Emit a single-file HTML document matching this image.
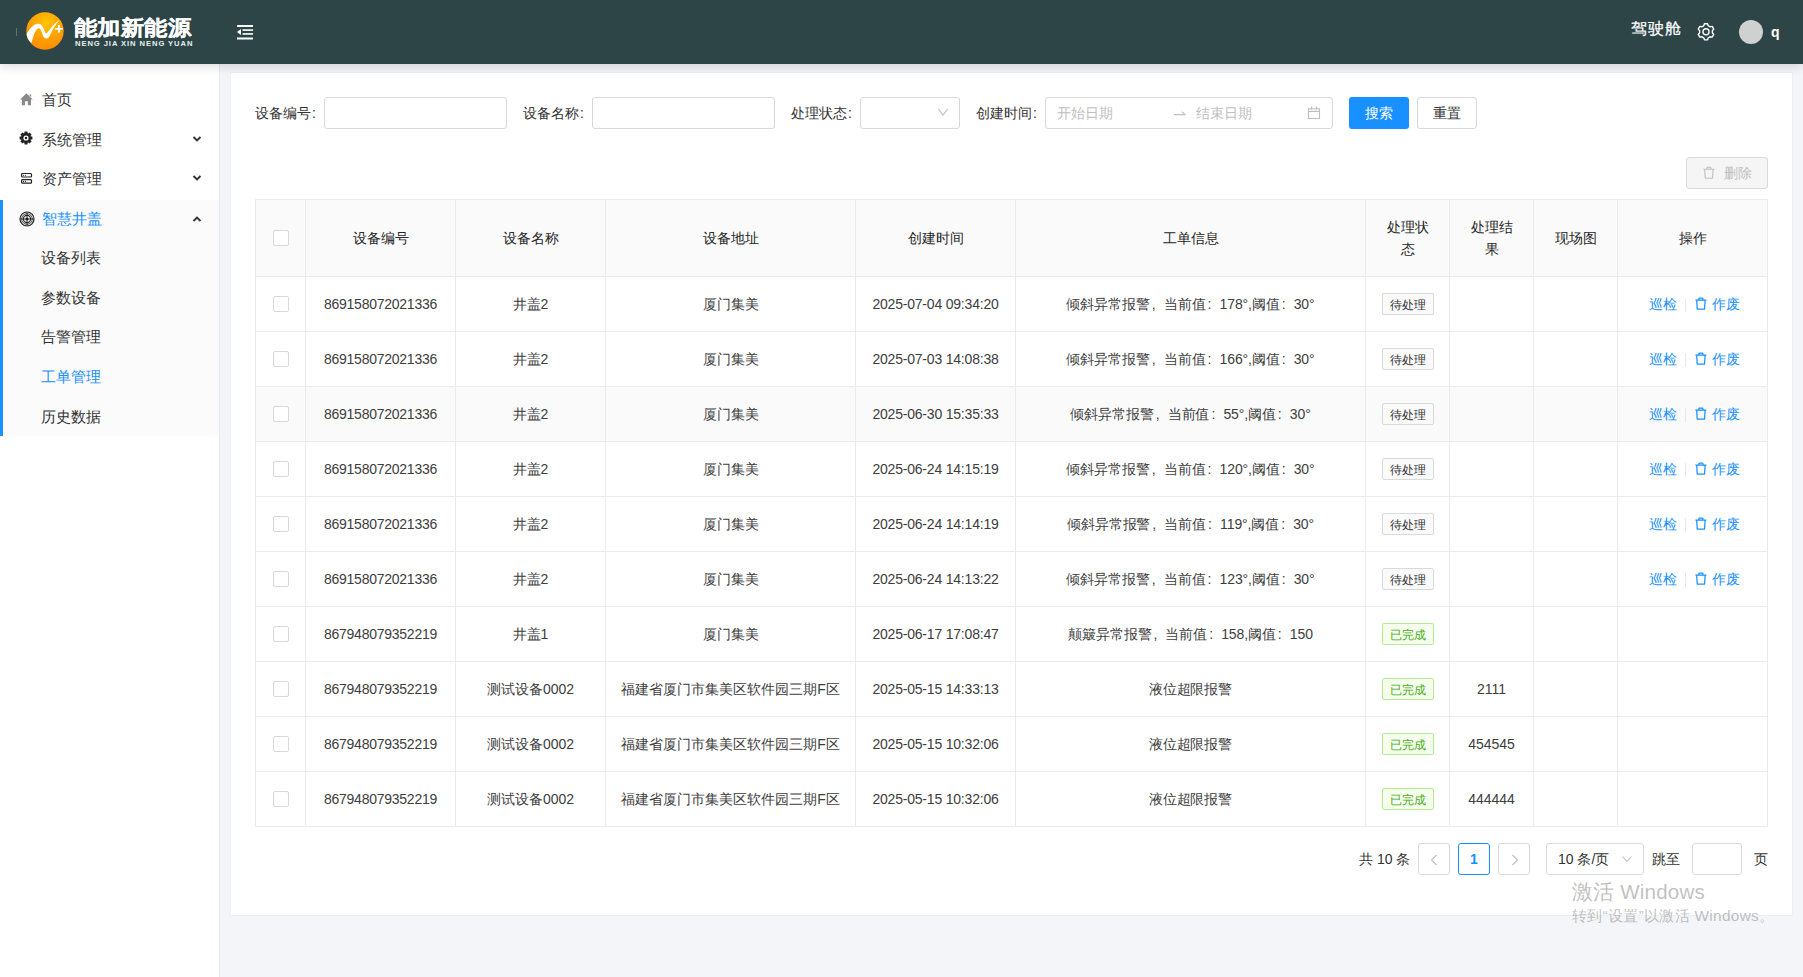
<!DOCTYPE html><html><head><meta charset="utf-8"><style>
*{box-sizing:border-box;margin:0;padding:0}
html,body{width:1803px;height:977px;overflow:hidden;background:#f4f5f9;font-family:"Liberation Sans",sans-serif;font-size:14px;color:#333}
.abs{position:absolute}
.hdr{left:0;top:0;width:1803px;height:64px;background:#2e4547;box-shadow:0 2px 10px rgba(0,21,41,.16);z-index:3}
.side{left:0;top:64px;width:220px;height:913px;background:#fff;border-right:1px solid #e8e8e8;z-index:2}
.card{left:230px;top:72px;width:1563px;height:844px;background:#fff;border:1px solid #eff0f3}
.t{position:absolute;white-space:nowrap;line-height:1}
.cell{position:absolute;display:flex;align-items:center;justify-content:center;white-space:nowrap;line-height:1;color:#3d3d3d}
.inp{position:absolute;border:1px solid #d9d9d9;border-radius:3px;background:#fff;height:32px}
.vl{position:absolute;width:1px;background:#ebebeb}
.hl{position:absolute;height:1px;background:#ebebeb}
.cb{position:absolute;width:16px;height:16px;border:1px solid #d9d9d9;border-radius:2px;background:#fff}
.tag{position:absolute;height:22px;width:52px;border:1px solid #d9d9d9;border-radius:2px;background:#fafafa;font-size:12px;line-height:20px;padding-top:1px;text-align:center;color:#333}
.tag.g{color:#48ad1a;background:#f6ffed;border-color:#b7eb8f}
.lnk{color:#1890ff}
.fw{display:inline-block;width:14px;padding-left:2px;text-align:left}
.mi{position:absolute;font-size:15px;line-height:1;white-space:nowrap;color:#333}
</style></head><body>
<div class="abs hdr">
<div class="abs" style="left:16px;top:28px;width:1px;height:8px;background:#5b7a6a"></div>
<svg class="abs" style="left:24px;top:10px" width="42" height="42" viewBox="0 0 42 42">
<defs><radialGradient id="lg" cx="0.55" cy="0.28" r="0.8"><stop offset="0" stop-color="#ffc400"/><stop offset="0.55" stop-color="#ff9f00"/><stop offset="1" stop-color="#ff8800"/></radialGradient></defs>
<circle cx="21" cy="21" r="18.7" fill="url(#lg)"/>
<clipPath id="lc"><circle cx="21" cy="21" r="18.7"/></clipPath>
<path clip-path="url(#lc)" d="M0.5 27.5 C4.5 20, 9 14.2, 13.5 13.8 C17.5 13.4, 19.3 17, 20.6 21 C21.4 23.3, 22.2 23.8, 23.2 22.8 C26.5 18.5, 30.5 12.8, 36 9.4 C31.5 14, 28.8 19, 26.4 24.5 C25.2 27.5, 23.8 28.6, 22 28.4 C19.8 28.1, 18.7 25.5, 17.9 22.5 C17.1 19.5, 16.2 18, 14.6 18.2 C12 18.6, 9.5 25, 7.5 33 Z" fill="#fff"/>
<path d="M31.2 18.9 h7.6 M35 15.1 v7.6" stroke="#fff" stroke-width="1.8"/>
</svg>
<div class="t" style="left:74px;top:16px;font-size:23px;font-weight:bold;color:#fff;letter-spacing:0.4px;transform:scaleY(0.9);transform-origin:0 22px;-webkit-text-stroke:0.3px #fff">能加新能源</div>
<div class="t" style="left:75px;top:39.5px;font-size:7.6px;font-weight:bold;color:#e8eeee;letter-spacing:0.93px">NENG JIA XIN NENG YUAN</div>
<svg class="abs" style="left:237px;top:24px" width="17" height="16" viewBox="0 0 17 16">
<rect x="0" y="1" width="16" height="2" fill="#fff"/>
<rect x="5.5" y="5.2" width="10.5" height="1.8" fill="#e6eeee"/>
<rect x="5.5" y="9" width="10.5" height="1.8" fill="#e6eeee"/>
<rect x="0" y="13.5" width="16" height="2" fill="#fff"/>
<path d="M0 8 L4 5 L4 11 Z" fill="#fff"/>
</svg>
<div class="t" style="left:1631px;top:21px;font-size:16px;color:#fff;letter-spacing:0.8px;-webkit-text-stroke:0.2px #fff">驾驶舱</div>
<svg class="abs" style="left:1696px;top:22px" width="20" height="20" viewBox="0 0 20 20">
<path d="M7.71 3.78 L8.44 1.70 L11.56 1.70 L12.29 3.78 A6.40 6.40 0 0 1 14.03 4.78 L16.19 4.37 L17.75 7.08 L16.32 8.75 A6.40 6.40 0 0 1 16.32 10.75 L17.75 12.42 L16.19 15.13 L14.03 14.72 A6.40 6.40 0 0 1 12.29 15.72 L11.56 17.80 L8.44 17.80 L7.71 15.72 A6.40 6.40 0 0 1 5.97 14.72 L3.81 15.13 L2.25 12.42 L3.68 10.75 A6.40 6.40 0 0 1 3.68 8.75 L2.25 7.08 L3.81 4.37 L5.97 4.78 A6.40 6.40 0 0 1 7.71 3.78 Z" fill="none" stroke="#fff" stroke-width="1.35" stroke-linejoin="round"/>
<circle cx="10" cy="9.75" r="3.05" fill="none" stroke="#fff" stroke-width="1.35"/>
</svg>
<div class="abs" style="left:1739px;top:20px;width:24px;height:24px;border-radius:50%;background:#cfd0d0"></div>
<div class="t" style="left:1771px;top:25px;font-size:14px;font-weight:bold;color:#fff">q</div>
</div>
<div class="abs side">
<div class="abs" style="left:0;top:136px;width:219px;height:236px;background:#fbfbfc"></div>
<div class="abs" style="left:0;top:136px;width:3px;height:236px;background:#1890ff"></div>
</div>
<svg class="abs" style="left:20px;top:93px;z-index:4" width="13" height="13" viewBox="0 0 13 13">
<path d="M6.4 0.3 L12.7 6.6 L11 6.6 L11 12.3 L7.8 12.3 L7.8 8.3 L5 8.3 L5 12.3 L1.8 12.3 L1.8 6.6 L0.1 6.6 Z" fill="#8a8a8a"/>
<path d="M9.5 1.5 h1.7 v2.6 l-1.7 -1.6Z" fill="#8a8a8a"/></svg>
<svg class="abs" style="left:19px;top:131.1px;z-index:4" width="14" height="14" viewBox="0 0 14 14">
<g fill="#222"><circle cx="7" cy="7" r="4.9"/>
<rect x="5.4" y="0.6" width="3.2" height="12.8" rx="0.4"/><rect x="0.6" y="5.4" width="12.8" height="3.2" rx="0.4"/>
<rect x="5.4" y="0.6" width="3.2" height="12.8" rx="0.4" transform="rotate(45 7 7)"/><rect x="5.4" y="0.6" width="3.2" height="12.8" rx="0.4" transform="rotate(-45 7 7)"/></g>
<circle cx="7" cy="7" r="2.6" fill="#fff"/><circle cx="7" cy="7" r="1.25" fill="#222"/></svg>
<svg class="abs" style="left:20px;top:172px;z-index:4" width="13" height="13" viewBox="0 0 13 13">
<rect x="1.6" y="1.5" width="9.9" height="3.5" rx="0.9" fill="none" stroke="#222" stroke-width="1.2"/>
<rect x="1.6" y="7.6" width="9.9" height="3.6" rx="0.9" fill="none" stroke="#222" stroke-width="1.2"/>
<circle cx="3.5" cy="3.25" r="0.6" fill="#222"/><circle cx="5.4" cy="3.25" r="0.6" fill="#222"/>
<circle cx="3.5" cy="9.4" r="0.6" fill="#222"/><circle cx="5.4" cy="9.4" r="0.6" fill="#222"/></svg>
<svg class="abs" style="left:18.6px;top:210.5px;z-index:4" width="16" height="16" viewBox="0 0 16 16">
<g fill="none" stroke="#222"><circle cx="8" cy="8" r="7" stroke-width="1.2"/><circle cx="8" cy="8" r="5.3" stroke-width="0.8"/>
<circle cx="8" cy="8" r="3.6" stroke-width="1.1"/><path d="M8 1.5v13M1.5 8h13" stroke-width="0.9"/></g>
<circle cx="8" cy="8" r="1.6" fill="#222"/></svg>
<div class="mi" style="left:42px;top:92px;color:#333;z-index:4">首页</div>
<div class="mi" style="left:42px;top:132px;color:#333;z-index:4">系统管理</div>
<svg class="abs" style="left:192px;top:135px;z-index:4" width="10" height="8" viewBox="0 0 10 8"><path d="M1.5 2 L5 5.5 L8.5 2" fill="none" stroke="#333" stroke-width="1.9"/></svg>
<div class="mi" style="left:42px;top:171px;color:#333;z-index:4">资产管理</div>
<svg class="abs" style="left:192px;top:174px;z-index:4" width="10" height="8" viewBox="0 0 10 8"><path d="M1.5 2 L5 5.5 L8.5 2" fill="none" stroke="#333" stroke-width="1.9"/></svg>
<div class="mi" style="left:42px;top:211px;color:#1890ff;z-index:4">智慧井盖</div>
<svg class="abs" style="left:192px;top:214.5px;z-index:4" width="10" height="8" viewBox="0 0 10 8"><path d="M1.5 6 L5 2.5 L8.5 6" fill="none" stroke="#333" stroke-width="1.9"/></svg>
<div class="mi" style="left:41px;top:250px;color:#333;z-index:4">设备列表</div>
<div class="mi" style="left:41px;top:290px;color:#333;z-index:4">参数设备</div>
<div class="mi" style="left:41px;top:329px;color:#333;z-index:4">告警管理</div>
<div class="mi" style="left:41px;top:369px;color:#1890ff;z-index:4">工单管理</div>
<div class="mi" style="left:41px;top:409px;color:#333;z-index:4">历史数据</div>
<div class="abs card"></div>
<div class="t" style="left:255px;top:106px;font-size:14px;color:#333">设备编号<span style="margin-left:1px">:</span></div>
<div class="t" style="left:523px;top:106px;font-size:14px;color:#333">设备名称<span style="margin-left:1px">:</span></div>
<div class="t" style="left:791px;top:106px;font-size:14px;color:#333">处理状态<span style="margin-left:1px">:</span></div>
<div class="t" style="left:976px;top:106px;font-size:14px;color:#333">创建时间<span style="margin-left:1px">:</span></div>
<div class="inp" style="left:324px;top:97px;width:183px"></div>
<div class="inp" style="left:592px;top:97px;width:183px"></div>
<div class="inp" style="left:860px;top:97px;width:100px"></div>
<svg class="abs" style="left:937px;top:108px" width="12" height="9" viewBox="0 0 12 9"><path d="M1.5 1.2 L6 7 L10.5 1.2" fill="none" stroke="#bfbfbf" stroke-width="1.1"/></svg>
<div class="inp" style="left:1045px;top:97px;width:288px"></div>
<div class="t" style="left:1057px;top:106px;color:#bfbfbf">开始日期</div>
<svg class="abs" style="left:1173px;top:108px" width="14" height="10" viewBox="0 0 14 10"><path d="M1 6.6 H12 L8.8 3.6" fill="none" stroke="#bfbfbf" stroke-width="1.15"/></svg>
<div class="t" style="left:1196px;top:106px;color:#bfbfbf">结束日期</div>
<svg class="abs" style="left:1307px;top:106px" width="14" height="14" viewBox="0 0 14 14"><path d="M1.5 2.8 H12.5 V12.5 H1.5 Z M1.5 5.4 H12.5 M4.5 0.4 V3.8 M9.5 0.4 V3.8" fill="none" stroke="#bfbfbf" stroke-width="1.1"/></svg>
<div class="abs" style="left:1349px;top:97px;width:60px;height:32px;background:#1890ff;border-radius:3px"></div>
<div class="t" style="left:1365px;top:106px;color:#fff">搜索</div>
<div class="inp" style="left:1417px;top:97px;width:60px"></div>
<div class="t" style="left:1433px;top:106px;color:#333">重置</div>
<div class="abs" style="left:1686px;top:157px;width:82px;height:32px;background:#f5f5f5;border:1px solid #d9d9d9;border-radius:3px"></div>
<svg class="abs" style="left:1703px;top:166px" width="12" height="13" viewBox="0 0 12 13"><path d="M3.9 3.1 V1.7 Q3.9 1.2 4.4 1.2 H7.4 Q7.9 1.2 7.9 1.7 V3.1 M0.4 3.2 H11.4 M1.7 3.2 L2.2 11.6 Q2.25 12.2 2.8 12.2 H9 Q9.55 12.2 9.6 11.6 L10.1 3.2" fill="none" stroke="#bfbfbf" stroke-width="1.1"/></svg>
<div class="t" style="left:1724px;top:166px;color:#bfbfbf">删除</div>
<div class="abs" style="left:255px;top:199px;width:1513px;height:77px;background:#fafafa"></div>
<div class="abs" style="left:255px;top:387px;width:1513px;height:54px;background:#fafafa"></div>
<div class="vl" style="left:255px;top:199px;height:628px"></div>
<div class="vl" style="left:305px;top:199px;height:628px"></div>
<div class="vl" style="left:455px;top:199px;height:628px"></div>
<div class="vl" style="left:605px;top:199px;height:628px"></div>
<div class="vl" style="left:855px;top:199px;height:628px"></div>
<div class="vl" style="left:1015px;top:199px;height:628px"></div>
<div class="vl" style="left:1365px;top:199px;height:628px"></div>
<div class="vl" style="left:1449px;top:199px;height:628px"></div>
<div class="vl" style="left:1533px;top:199px;height:628px"></div>
<div class="vl" style="left:1617px;top:199px;height:628px"></div>
<div class="vl" style="left:1767px;top:199px;height:628px"></div>
<div class="hl" style="left:255px;top:199px;width:1513px"></div>
<div class="hl" style="left:255px;top:276px;width:1513px"></div>
<div class="hl" style="left:255px;top:331px;width:1513px"></div>
<div class="hl" style="left:255px;top:386px;width:1513px"></div>
<div class="hl" style="left:255px;top:441px;width:1513px"></div>
<div class="hl" style="left:255px;top:496px;width:1513px"></div>
<div class="hl" style="left:255px;top:551px;width:1513px"></div>
<div class="hl" style="left:255px;top:606px;width:1513px"></div>
<div class="hl" style="left:255px;top:661px;width:1513px"></div>
<div class="hl" style="left:255px;top:716px;width:1513px"></div>
<div class="hl" style="left:255px;top:771px;width:1513px"></div>
<div class="hl" style="left:255px;top:826px;width:1513px"></div>
<div class="cb" style="left:273px;top:230px"></div>
<div class="cell" style="left:306px;top:200px;width:149px;height:76px;color:#262626">设备编号</div>
<div class="cell" style="left:456px;top:200px;width:149px;height:76px;color:#262626">设备名称</div>
<div class="cell" style="left:606px;top:200px;width:249px;height:76px;color:#262626">设备地址</div>
<div class="cell" style="left:856px;top:200px;width:159px;height:76px;color:#262626">创建时间</div>
<div class="cell" style="left:1016px;top:200px;width:349px;height:76px;color:#262626">工单信息</div>
<div class="cell" style="left:1366px;top:200px;width:83px;height:76px;color:#262626"><div style="text-align:center;line-height:22px">处理状<br>态</div></div>
<div class="cell" style="left:1450px;top:200px;width:83px;height:76px;color:#262626"><div style="text-align:center;line-height:22px">处理结<br>果</div></div>
<div class="cell" style="left:1534px;top:200px;width:83px;height:76px;color:#262626">现场图</div>
<div class="cell" style="left:1618px;top:200px;width:149px;height:76px;color:#262626">操作</div>
<div class="cb" style="left:273px;top:296px"></div>
<div class="cell" style="left:306px;top:277px;width:149px;height:54px;letter-spacing:-0.25px">869158072021336</div>
<div class="cell" style="left:456px;top:277px;width:149px;height:54px;">井盖2</div>
<div class="cell" style="left:606px;top:277px;width:249px;height:54px;">厦门集美</div>
<div class="cell" style="left:856px;top:277px;width:159px;height:54px;letter-spacing:-0.2px">2025-07-04 09:34:20</div>
<div class="cell" style="left:1016px;top:277px;width:349px;height:54px;letter-spacing:-0.1px">倾斜异常报警<span class="fw">,</span>当前值<span class="fw">:</span>178°,阈值<span class="fw">:</span>30°</div>
<div class="tag" style="left:1382px;top:293px">待处理</div>
<div class="t lnk" style="left:1649px;top:297px">巡检</div>
<div class="abs" style="left:1685px;top:298px;width:1px;height:14px;background:#e8e8e8"></div>
<div class="t lnk" style="left:1695px;top:297px;display:flex;align-items:center"><svg width="12" height="13" viewBox="0 0 12 13" style="margin-right:5px;position:relative;top:-0.5px"><path d="M3.9 3.1 V1.7 Q3.9 1.2 4.4 1.2 H7.4 Q7.9 1.2 7.9 1.7 V3.1 M0.4 3.2 H11.4 M1.7 3.2 L2.2 11.6 Q2.25 12.2 2.8 12.2 H9 Q9.55 12.2 9.6 11.6 L10.1 3.2" fill="none" stroke="#1890ff" stroke-width="1.25"/></svg>作废</div>
<div class="cb" style="left:273px;top:351px"></div>
<div class="cell" style="left:306px;top:332px;width:149px;height:54px;letter-spacing:-0.25px">869158072021336</div>
<div class="cell" style="left:456px;top:332px;width:149px;height:54px;">井盖2</div>
<div class="cell" style="left:606px;top:332px;width:249px;height:54px;">厦门集美</div>
<div class="cell" style="left:856px;top:332px;width:159px;height:54px;letter-spacing:-0.2px">2025-07-03 14:08:38</div>
<div class="cell" style="left:1016px;top:332px;width:349px;height:54px;letter-spacing:-0.1px">倾斜异常报警<span class="fw">,</span>当前值<span class="fw">:</span>166°,阈值<span class="fw">:</span>30°</div>
<div class="tag" style="left:1382px;top:348px">待处理</div>
<div class="t lnk" style="left:1649px;top:352px">巡检</div>
<div class="abs" style="left:1685px;top:353px;width:1px;height:14px;background:#e8e8e8"></div>
<div class="t lnk" style="left:1695px;top:352px;display:flex;align-items:center"><svg width="12" height="13" viewBox="0 0 12 13" style="margin-right:5px;position:relative;top:-0.5px"><path d="M3.9 3.1 V1.7 Q3.9 1.2 4.4 1.2 H7.4 Q7.9 1.2 7.9 1.7 V3.1 M0.4 3.2 H11.4 M1.7 3.2 L2.2 11.6 Q2.25 12.2 2.8 12.2 H9 Q9.55 12.2 9.6 11.6 L10.1 3.2" fill="none" stroke="#1890ff" stroke-width="1.25"/></svg>作废</div>
<div class="cb" style="left:273px;top:406px"></div>
<div class="cell" style="left:306px;top:387px;width:149px;height:54px;letter-spacing:-0.25px">869158072021336</div>
<div class="cell" style="left:456px;top:387px;width:149px;height:54px;">井盖2</div>
<div class="cell" style="left:606px;top:387px;width:249px;height:54px;">厦门集美</div>
<div class="cell" style="left:856px;top:387px;width:159px;height:54px;letter-spacing:-0.2px">2025-06-30 15:35:33</div>
<div class="cell" style="left:1016px;top:387px;width:349px;height:54px;letter-spacing:-0.1px">倾斜异常报警<span class="fw">,</span>当前值<span class="fw">:</span>55°,阈值<span class="fw">:</span>30°</div>
<div class="tag" style="left:1382px;top:403px">待处理</div>
<div class="t lnk" style="left:1649px;top:407px">巡检</div>
<div class="abs" style="left:1685px;top:408px;width:1px;height:14px;background:#e8e8e8"></div>
<div class="t lnk" style="left:1695px;top:407px;display:flex;align-items:center"><svg width="12" height="13" viewBox="0 0 12 13" style="margin-right:5px;position:relative;top:-0.5px"><path d="M3.9 3.1 V1.7 Q3.9 1.2 4.4 1.2 H7.4 Q7.9 1.2 7.9 1.7 V3.1 M0.4 3.2 H11.4 M1.7 3.2 L2.2 11.6 Q2.25 12.2 2.8 12.2 H9 Q9.55 12.2 9.6 11.6 L10.1 3.2" fill="none" stroke="#1890ff" stroke-width="1.25"/></svg>作废</div>
<div class="cb" style="left:273px;top:461px"></div>
<div class="cell" style="left:306px;top:442px;width:149px;height:54px;letter-spacing:-0.25px">869158072021336</div>
<div class="cell" style="left:456px;top:442px;width:149px;height:54px;">井盖2</div>
<div class="cell" style="left:606px;top:442px;width:249px;height:54px;">厦门集美</div>
<div class="cell" style="left:856px;top:442px;width:159px;height:54px;letter-spacing:-0.2px">2025-06-24 14:15:19</div>
<div class="cell" style="left:1016px;top:442px;width:349px;height:54px;letter-spacing:-0.1px">倾斜异常报警<span class="fw">,</span>当前值<span class="fw">:</span>120°,阈值<span class="fw">:</span>30°</div>
<div class="tag" style="left:1382px;top:458px">待处理</div>
<div class="t lnk" style="left:1649px;top:462px">巡检</div>
<div class="abs" style="left:1685px;top:463px;width:1px;height:14px;background:#e8e8e8"></div>
<div class="t lnk" style="left:1695px;top:462px;display:flex;align-items:center"><svg width="12" height="13" viewBox="0 0 12 13" style="margin-right:5px;position:relative;top:-0.5px"><path d="M3.9 3.1 V1.7 Q3.9 1.2 4.4 1.2 H7.4 Q7.9 1.2 7.9 1.7 V3.1 M0.4 3.2 H11.4 M1.7 3.2 L2.2 11.6 Q2.25 12.2 2.8 12.2 H9 Q9.55 12.2 9.6 11.6 L10.1 3.2" fill="none" stroke="#1890ff" stroke-width="1.25"/></svg>作废</div>
<div class="cb" style="left:273px;top:516px"></div>
<div class="cell" style="left:306px;top:497px;width:149px;height:54px;letter-spacing:-0.25px">869158072021336</div>
<div class="cell" style="left:456px;top:497px;width:149px;height:54px;">井盖2</div>
<div class="cell" style="left:606px;top:497px;width:249px;height:54px;">厦门集美</div>
<div class="cell" style="left:856px;top:497px;width:159px;height:54px;letter-spacing:-0.2px">2025-06-24 14:14:19</div>
<div class="cell" style="left:1016px;top:497px;width:349px;height:54px;letter-spacing:-0.1px">倾斜异常报警<span class="fw">,</span>当前值<span class="fw">:</span>119°,阈值<span class="fw">:</span>30°</div>
<div class="tag" style="left:1382px;top:513px">待处理</div>
<div class="t lnk" style="left:1649px;top:517px">巡检</div>
<div class="abs" style="left:1685px;top:518px;width:1px;height:14px;background:#e8e8e8"></div>
<div class="t lnk" style="left:1695px;top:517px;display:flex;align-items:center"><svg width="12" height="13" viewBox="0 0 12 13" style="margin-right:5px;position:relative;top:-0.5px"><path d="M3.9 3.1 V1.7 Q3.9 1.2 4.4 1.2 H7.4 Q7.9 1.2 7.9 1.7 V3.1 M0.4 3.2 H11.4 M1.7 3.2 L2.2 11.6 Q2.25 12.2 2.8 12.2 H9 Q9.55 12.2 9.6 11.6 L10.1 3.2" fill="none" stroke="#1890ff" stroke-width="1.25"/></svg>作废</div>
<div class="cb" style="left:273px;top:571px"></div>
<div class="cell" style="left:306px;top:552px;width:149px;height:54px;letter-spacing:-0.25px">869158072021336</div>
<div class="cell" style="left:456px;top:552px;width:149px;height:54px;">井盖2</div>
<div class="cell" style="left:606px;top:552px;width:249px;height:54px;">厦门集美</div>
<div class="cell" style="left:856px;top:552px;width:159px;height:54px;letter-spacing:-0.2px">2025-06-24 14:13:22</div>
<div class="cell" style="left:1016px;top:552px;width:349px;height:54px;letter-spacing:-0.1px">倾斜异常报警<span class="fw">,</span>当前值<span class="fw">:</span>123°,阈值<span class="fw">:</span>30°</div>
<div class="tag" style="left:1382px;top:568px">待处理</div>
<div class="t lnk" style="left:1649px;top:572px">巡检</div>
<div class="abs" style="left:1685px;top:573px;width:1px;height:14px;background:#e8e8e8"></div>
<div class="t lnk" style="left:1695px;top:572px;display:flex;align-items:center"><svg width="12" height="13" viewBox="0 0 12 13" style="margin-right:5px;position:relative;top:-0.5px"><path d="M3.9 3.1 V1.7 Q3.9 1.2 4.4 1.2 H7.4 Q7.9 1.2 7.9 1.7 V3.1 M0.4 3.2 H11.4 M1.7 3.2 L2.2 11.6 Q2.25 12.2 2.8 12.2 H9 Q9.55 12.2 9.6 11.6 L10.1 3.2" fill="none" stroke="#1890ff" stroke-width="1.25"/></svg>作废</div>
<div class="cb" style="left:273px;top:626px"></div>
<div class="cell" style="left:306px;top:607px;width:149px;height:54px;letter-spacing:-0.25px">867948079352219</div>
<div class="cell" style="left:456px;top:607px;width:149px;height:54px;">井盖1</div>
<div class="cell" style="left:606px;top:607px;width:249px;height:54px;">厦门集美</div>
<div class="cell" style="left:856px;top:607px;width:159px;height:54px;letter-spacing:-0.2px">2025-06-17 17:08:47</div>
<div class="cell" style="left:1016px;top:607px;width:349px;height:54px;letter-spacing:-0.1px">颠簸异常报警<span class="fw">,</span>当前值<span class="fw">:</span>158,阈值<span class="fw">:</span>150</div>
<div class="tag g" style="left:1382px;top:623px">已完成</div>
<div class="cb" style="left:273px;top:681px"></div>
<div class="cell" style="left:306px;top:662px;width:149px;height:54px;letter-spacing:-0.25px">867948079352219</div>
<div class="cell" style="left:456px;top:662px;width:149px;height:54px;">测试设备0002</div>
<div class="cell" style="left:606px;top:662px;width:249px;height:54px;">福建省厦门市集美区软件园三期F区</div>
<div class="cell" style="left:856px;top:662px;width:159px;height:54px;letter-spacing:-0.2px">2025-05-15 14:33:13</div>
<div class="cell" style="left:1016px;top:662px;width:349px;height:54px;letter-spacing:-0.1px">液位超限报警</div>
<div class="tag g" style="left:1382px;top:678px">已完成</div>
<div class="cell" style="left:1450px;top:662px;width:83px;height:54px;">2111</div>
<div class="cb" style="left:273px;top:736px"></div>
<div class="cell" style="left:306px;top:717px;width:149px;height:54px;letter-spacing:-0.25px">867948079352219</div>
<div class="cell" style="left:456px;top:717px;width:149px;height:54px;">测试设备0002</div>
<div class="cell" style="left:606px;top:717px;width:249px;height:54px;">福建省厦门市集美区软件园三期F区</div>
<div class="cell" style="left:856px;top:717px;width:159px;height:54px;letter-spacing:-0.2px">2025-05-15 10:32:06</div>
<div class="cell" style="left:1016px;top:717px;width:349px;height:54px;letter-spacing:-0.1px">液位超限报警</div>
<div class="tag g" style="left:1382px;top:733px">已完成</div>
<div class="cell" style="left:1450px;top:717px;width:83px;height:54px;">454545</div>
<div class="cb" style="left:273px;top:791px"></div>
<div class="cell" style="left:306px;top:772px;width:149px;height:54px;letter-spacing:-0.25px">867948079352219</div>
<div class="cell" style="left:456px;top:772px;width:149px;height:54px;">测试设备0002</div>
<div class="cell" style="left:606px;top:772px;width:249px;height:54px;">福建省厦门市集美区软件园三期F区</div>
<div class="cell" style="left:856px;top:772px;width:159px;height:54px;letter-spacing:-0.2px">2025-05-15 10:32:06</div>
<div class="cell" style="left:1016px;top:772px;width:349px;height:54px;letter-spacing:-0.1px">液位超限报警</div>
<div class="tag g" style="left:1382px;top:788px">已完成</div>
<div class="cell" style="left:1450px;top:772px;width:83px;height:54px;">444444</div>
<div class="t" style="left:1359px;top:852px;color:#333">共 10 条</div>
<div class="inp" style="left:1418px;top:843px;width:32px"></div>
<svg class="abs" style="left:1429px;top:853px" width="10" height="14" viewBox="0 0 10 14"><path d="M7.5 2 L2.5 7 L7.5 12" fill="none" stroke="#bfbfbf" stroke-width="1.1"/></svg>
<div class="inp" style="left:1458px;top:843px;width:32px;border-color:#1890ff;color:#1890ff;font-weight:bold;text-align:center;line-height:30px">1</div>
<div class="inp" style="left:1498px;top:843px;width:32px"></div>
<svg class="abs" style="left:1510px;top:853px" width="10" height="14" viewBox="0 0 10 14"><path d="M2.5 2 L7.5 7 L2.5 12" fill="none" stroke="#bfbfbf" stroke-width="1.1"/></svg>
<div class="inp" style="left:1546px;top:843px;width:98px"></div>
<div class="t" style="left:1558px;top:852px;color:#333">10 条/页</div>
<svg class="abs" style="left:1621px;top:854.5px" width="12" height="9" viewBox="0 0 12 9"><path d="M1.5 1.5 L6 6.5 L10.5 1.5" fill="none" stroke="#bfbfbf" stroke-width="1.1"/></svg>
<div class="t" style="left:1652px;top:852px;color:#333">跳至</div>
<div class="inp" style="left:1692px;top:843px;width:50px"></div>
<div class="t" style="left:1754px;top:852px;color:#333">页</div>
<div class="t" style="left:1572px;top:881.5px;font-size:20.5px;color:rgba(140,140,140,.55);letter-spacing:0.2px">激活 Windows</div>
<div class="t" style="left:1572px;top:907.5px;font-size:15.4px;color:rgba(140,140,140,.55);letter-spacing:0.3px">转到“设置”以激活 Windows。</div>
</body></html>
